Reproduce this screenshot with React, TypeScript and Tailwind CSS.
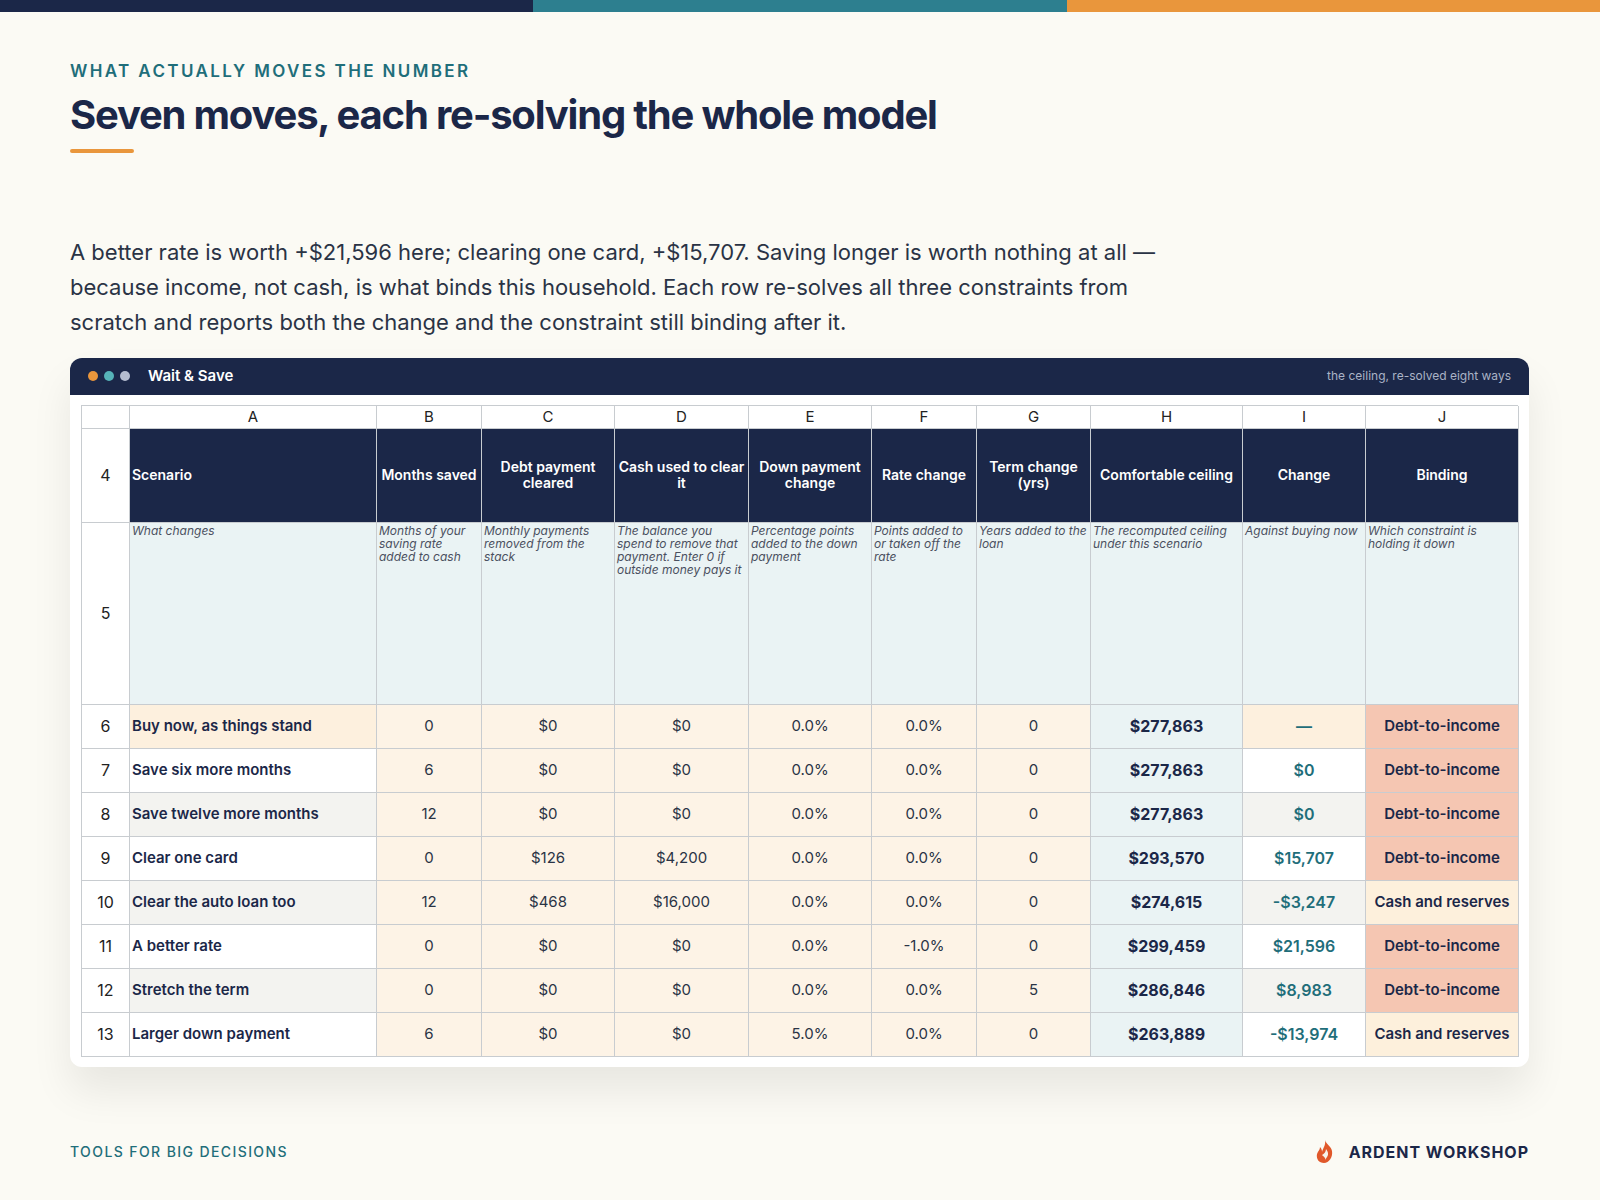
const cols = ['A', 'B', 'C', 'D', 'E', 'F', 'G', 'H', 'I', 'J'];

const heads = [
  'Scenario',
  'Months saved',
  'Debt payment cleared',
  'Cash used to clear it',
  'Down payment change',
  'Rate change',
  'Term change (yrs)',
  'Comfortable ceiling',
  'Change',
  'Binding',
];

const notes = [
  'What changes',
  'Months of your saving rate added to cash',
  'Monthly payments removed from the stack',
  'The balance you spend to remove that payment. Enter 0 if outside money pays it',
  'Percentage points added to the down payment',
  'Points added to or taken off the rate',
  'Years added to the loan',
  'The recomputed ceiling under this scenario',
  'Against buying now',
  'Which constraint is holding it down',
];

const rows = [
  ['Buy now, as things stand', '0', '$0', '$0', '0.0%', '0.0%', '0', '$277,863', '—', 'Debt-to-income'],
  ['Save six more months', '6', '$0', '$0', '0.0%', '0.0%', '0', '$277,863', '$0', 'Debt-to-income'],
  ['Save twelve more months', '12', '$0', '$0', '0.0%', '0.0%', '0', '$277,863', '$0', 'Debt-to-income'],
  ['Clear one card', '0', '$126', '$4,200', '0.0%', '0.0%', '0', '$293,570', '$15,707', 'Debt-to-income'],
  ['Clear the auto loan too', '12', '$468', '$16,000', '0.0%', '0.0%', '0', '$274,615', '-$3,247', 'Cash and reserves'],
  ['A better rate', '0', '$0', '$0', '0.0%', '-1.0%', '0', '$299,459', '$21,596', 'Debt-to-income'],
  ['Stretch the term', '0', '$0', '$0', '0.0%', '0.0%', '5', '$286,846', '$8,983', 'Debt-to-income'],
  ['Larger down payment', '6', '$0', '$0', '5.0%', '0.0%', '0', '$263,889', '-$13,974', 'Cash and reserves'],
];

const grid =
  'grid grid-cols-[48px_247px_105px_133px_134px_123px_105px_114px_152px_123px_153px]';
const cell = 'border-r border-b border-[#c8ccd0]';

function Flame() {
  return (
    <svg width="24" height="26" viewBox="0 0 24 26">
      <path
        d="M12 1c1 4 6 6 7 11 1 6-3 12-8 12S3 20 4 15c1-3 3-4 3-7 2 2 2 4 2 5 1-4 4-7 3-12z"
        fill="#e0582a"
      />
      <path d="M9 16c2-1 4-3 4-6 2 3 3 5 1 8l-2 3c1-2-1-3-3-5z" fill="#f6f3ea" />
    </svg>
  );
}

export default function App() {
  return (
    <div className="min-h-[1200px] w-[1600px] bg-[#fbfaf4] [font-family:Inter,sans-serif] text-[#1b2a4a]">
      <div className="flex h-3">
        <div className="flex-1 bg-[#1b2748]" />
        <div className="flex-1 bg-[#2d7f8f]" />
        <div className="flex-1 bg-[#e9963c]" />
      </div>

      <div className="px-[70px]">
        <p className="mt-[47px] text-[17px] font-semibold uppercase tracking-[0.14em] text-[#1f6e7a]">
          What actually moves the number
        </p>
        <h1 className="mt-[4px] [font-family:'DejaVu_Serif',serif] text-[40px] font-bold leading-[52px] tracking-[-0.03em] text-[#1b2748]">
          Seven moves, each re-solving the whole model
        </h1>
        <div className="mt-[8px] h-[4px] w-[64px] rounded-full bg-[#e9963c]" />

        <p className="mt-[82px] w-[1140px] text-[22px] leading-[35px] text-[#2a3345]">
          A better rate is worth +$21,596 here; clearing one card, +$15,707. Saving longer is worth
          nothing at all — because income, not cash, is what binds this household. Each row
          re-solves all three constraints from scratch and reports both the change and the
          constraint still binding after it.
        </p>

        <div className="mt-[18px] w-[1459px] overflow-hidden rounded-xl bg-white shadow-[0_24px_40px_rgba(0,0,0,0.08)]">
          <div className="flex h-[37px] items-center justify-between bg-[#1b2748] px-[18px]">
            <div className="flex items-center gap-[6px]">
              <span className="h-[10px] w-[10px] rounded-full bg-[#e9963c]" />
              <span className="h-[10px] w-[10px] rounded-full bg-[#56b3b8]" />
              <span className="h-[10px] w-[10px] rounded-full bg-[#b5bdd0]" />
              <span className="ml-[12px] text-[15px] font-semibold text-white">Wait &amp; Save</span>
            </div>
            <span className="text-[12px] text-[#aab3c6]">the ceiling, re-solved eight ways</span>
          </div>

          <div className="px-[11px] pb-[10px] pt-[10px] [font-family:'Open_Sans',sans-serif]">
            <div className="border-l border-t border-[#c8ccd0]">
              <div className={`${grid} h-[23px] text-[15px] text-[#222]`}>
                <div className={cell} />
                {cols.map((c) => (
                  <div key={c} className={`${cell} flex items-center justify-center`}>
                    {c}
                  </div>
                ))}
              </div>
              <div className={`${grid} h-[94px]`}>
                <div className={`${cell} flex items-center justify-center text-[16px] text-[#222]`}>4</div>
                {heads.map((h, i) => (
                  <div
                    key={h}
                    className={`${cell} flex items-center border-[#2a3656] bg-[#1b2748] px-[2px] text-[14px] font-semibold leading-[16px] text-white ${
                      i === 0 ? 'justify-start' : 'justify-center text-center'
                    }`}
                  >
                    {h}
                  </div>
                ))}
              </div>
              <div className={`${grid} h-[182px]`}>
                <div className={`${cell} flex items-center justify-center text-[16px] text-[#222]`}>5</div>
                {notes.map((n) => (
                  <div
                    key={n}
                    className={`${cell} bg-[#eaf3f4] px-[2px] pt-[1px] text-[12px] italic leading-[13px] text-[#4a5060]`}
                  >
                    {n}
                  </div>
                ))}
              </div>
              {rows.map((r, ri) => {
                const stripe = ri === 0 ? 'bg-[#fdf0de]' : ri % 2 === 1 ? 'bg-white' : 'bg-[#f3f3f0]';
                return (
                  <div key={ri} className={`${grid} h-[44px] text-[15px]`}>
                    <div className={`${cell} flex items-center justify-center text-[16px] text-[#222]`}>
                      {ri + 6}
                    </div>
                    {r.map((v, ci) => {
                      let cls = 'justify-center text-[#2a3345]';
                      if (ci === 0) cls = `justify-start pl-[2px] font-semibold text-[#1b2748] ${stripe}`;
                      else if (ci < 7) cls += ' bg-[#fdf3e6]';
                      else if (ci === 7) cls = 'justify-center bg-[#eaf3f4] text-[16px] font-bold text-[#1b2748]';
                      else if (ci === 8) cls = `justify-center text-[16px] font-semibold text-[#1f6e7a] ${stripe}`;
                      else
                        cls = `justify-center font-semibold text-[#1b2748] ${
                          v === 'Debt-to-income' ? 'bg-[#f5c6b2]' : 'bg-[#fdf0dc]'
                        }`;
                      return (
                        <div key={ci} className={`${cell} flex items-center ${cls}`}>
                          {v}
                        </div>
                      );
                    })}
                  </div>
                );
              })}
            </div>
          </div>
        </div>

        <div className="mt-[72px] flex w-[1459px] items-center justify-between">
          <span className="text-[14px] font-medium uppercase tracking-[0.1em] text-[#1f6e7a]">
            Tools for big decisions
          </span>
          <div className="flex items-center gap-[12px]">
            <Flame />
            <span className="text-[16px] font-bold uppercase tracking-[0.06em] text-[#1b2748]">
              Ardent Workshop
            </span>
          </div>
        </div>
      </div>
    </div>
  );
}
